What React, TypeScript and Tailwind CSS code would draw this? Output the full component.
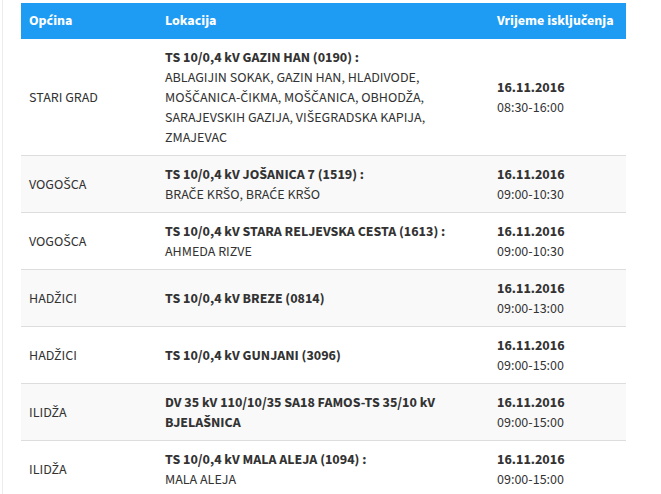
type Row = {
  opcina: string;
  title: string[];
  lines: string[];
  date: string;
  time: string;
};

const rows: Row[] = [
  {
    opcina: "STARI GRAD",
    title: ["TS 10/0,4 kV GAZIN HAN (0190) :"],
    lines: [
      "ABLAGIJIN SOKAK, GAZIN HAN, HLADIVODE,",
      "MOŠČANICA-ČIKMA, MOŠČANICA, OBHODŽA,",
      "SARAJEVSKIH GAZIJA, VIŠEGRADSKA KAPIJA,",
      "ZMAJEVAC",
    ],
    date: "16.11.2016",
    time: "08:30-16:00",
  },
  {
    opcina: "VOGOŠCA",
    title: ["TS 10/0,4 kV JOŠANICA 7 (1519) :"],
    lines: ["BRAČE KRŠO, BRAĆE KRŠO"],
    date: "16.11.2016",
    time: "09:00-10:30",
  },
  {
    opcina: "VOGOŠCA",
    title: ["TS 10/0,4 kV STARA RELJEVSKA CESTA (1613) :"],
    lines: ["AHMEDA RIZVE"],
    date: "16.11.2016",
    time: "09:00-10:30",
  },
  {
    opcina: "HADŽICI",
    title: ["TS 10/0,4 kV BREZE (0814)"],
    lines: [],
    date: "16.11.2016",
    time: "09:00-13:00",
  },
  {
    opcina: "HADŽICI",
    title: ["TS 10/0,4 kV GUNJANI (3096)"],
    lines: [],
    date: "16.11.2016",
    time: "09:00-15:00",
  },
  {
    opcina: "ILIDŽA",
    title: ["DV 35 kV 110/10/35 SA18 FAMOS-TS 35/10 kV", "BJELAŠNICA"],
    lines: [],
    date: "16.11.2016",
    time: "09:00-15:00",
  },
  {
    opcina: "ILIDŽA",
    title: ["TS 10/0,4 kV MALA ALEJA (1094) :"],
    lines: ["MALA ALEJA"],
    date: "16.11.2016",
    time: "09:00-15:00",
  },
];

export default function App() {
  return (
    <div className="h-[494px] overflow-hidden bg-white pl-[2px] font-['Source_Sans_3','Roboto_Condensed',sans-serif] text-[14px] leading-[20px] text-[#333333]">
      <div className="h-full border-l border-[#ececec] pl-[18px] pt-[3px]">
        <table className="w-[605px] table-fixed border-collapse">
          <colgroup>
            <col className="w-[136px]" />
            <col className="w-[332px]" />
            <col className="w-[137px]" />
          </colgroup>
          <thead>
            <tr className="bg-[#1e9cf3] text-left text-white">
              <th className="px-2 py-2 font-bold">Općina</th>
              <th className="px-2 py-2 font-bold">Lokacija</th>
              <th className="px-2 py-2 font-bold">Vrijeme isključenja</th>
            </tr>
          </thead>
          <tbody>
            {rows.map((r, i) => (
              <tr
                key={i}
                className={`border-b border-[#dddddd] align-middle ${i % 2 === 1 ? "bg-[#f9f9f9]" : "bg-white"}`}
              >
                <td className="px-2 pt-[9px] pb-[7px]">{r.opcina}</td>
                <td className="px-2 pt-[9px] pb-[7px]">
                  {r.title.map((t, j) => (
                    <div key={j} className="font-bold">{t}</div>
                  ))}
                  {r.lines.map((l, j) => (
                    <div key={j}>{l}</div>
                  ))}
                </td>
                <td className="px-2 pt-[9px] pb-[7px]">
                  <div className="font-bold">{r.date}</div>
                  <div>{r.time}</div>
                </td>
              </tr>
            ))}
          </tbody>
        </table>
      </div>
    </div>
  );
}
